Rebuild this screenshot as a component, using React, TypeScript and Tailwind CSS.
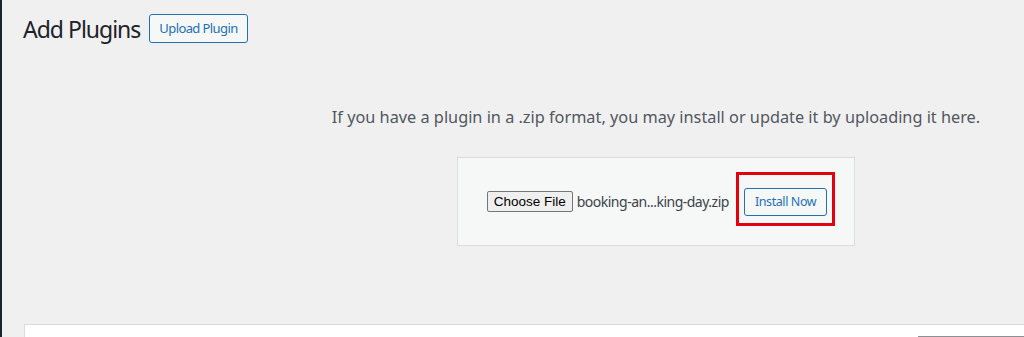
import React from "react";

const wp = { fontFamily: '"Noto Sans", "Open Sans", sans-serif' };

export default function App() {
  return (
    <div className="flex h-[337px] w-[1024px] overflow-hidden bg-[#f0f0f1]" style={wp}>
      <div className="w-[2px] shrink-0 bg-[#1d2327]" />
      <div className="flex min-w-0 flex-1 flex-col pl-[21px]">
        <div className="flex h-[29px] items-center gap-[9px] mt-[14px]">
          <h1 className="mt-[2px] text-[23px] font-normal leading-[29px] tracking-[-1px] text-[#1d2327]">Add Plugins</h1>
          <button className="h-[29px] rounded-[3px] border border-[#2271b1] bg-[#f6f7f7] px-[9px] text-[13px] leading-[27px] tracking-[-0.6px] text-[#2271b1]">
            Upload Plugin
          </button>
        </div>
        <div className="w-[1266px] shrink-0 text-center">
          <p className="mt-[62px] text-[16.3px] leading-[24px] text-[#50575e]">
            If you have a plugin in a .zip format, you may install or update it by uploading it here.
          </p>
          <div className="mx-auto mt-[28px] flex h-[89px] w-[398px] items-center justify-center border border-[#dcdcde] bg-[#f6f7f7] pl-[2px]">
            <div className="flex items-center">
              <span
                className="h-[21px] rounded-[2px] border border-[#767676] bg-[#efefef] px-[6px] text-[13.5px] leading-[19px] text-black"
                style={{ fontFamily: '"Liberation Sans", Arial, sans-serif' }}
              >
                Choose File
              </span>
              <span className="ml-[4px] text-[14px] tracking-[-0.5px] text-[#3c434a]">booking-an...king-day.zip</span>
            </div>
            <div className="relative ml-[15px]">
              <button className="h-[28px] rounded-[3px] border border-[#2271b1] bg-[#f6f7f7] px-[10px] text-[12.5px] leading-[26px] tracking-[-0.4px] text-[#2271b1]">
                Install Now
              </button>
              <span className="pointer-events-none absolute -left-[8px] -right-[8px] -top-[16px] -bottom-[10px] border-[3px] border-[#e3000f]" />
            </div>
          </div>
        </div>
        <div className="mt-auto ml-[1px] flex h-[13px] justify-end border-l border-t border-[#dcdcde] bg-white">
          <div className="mt-[11px] h-px w-[106px] bg-[#8c8f94]" />
        </div>
      </div>
    </div>
  );
}
